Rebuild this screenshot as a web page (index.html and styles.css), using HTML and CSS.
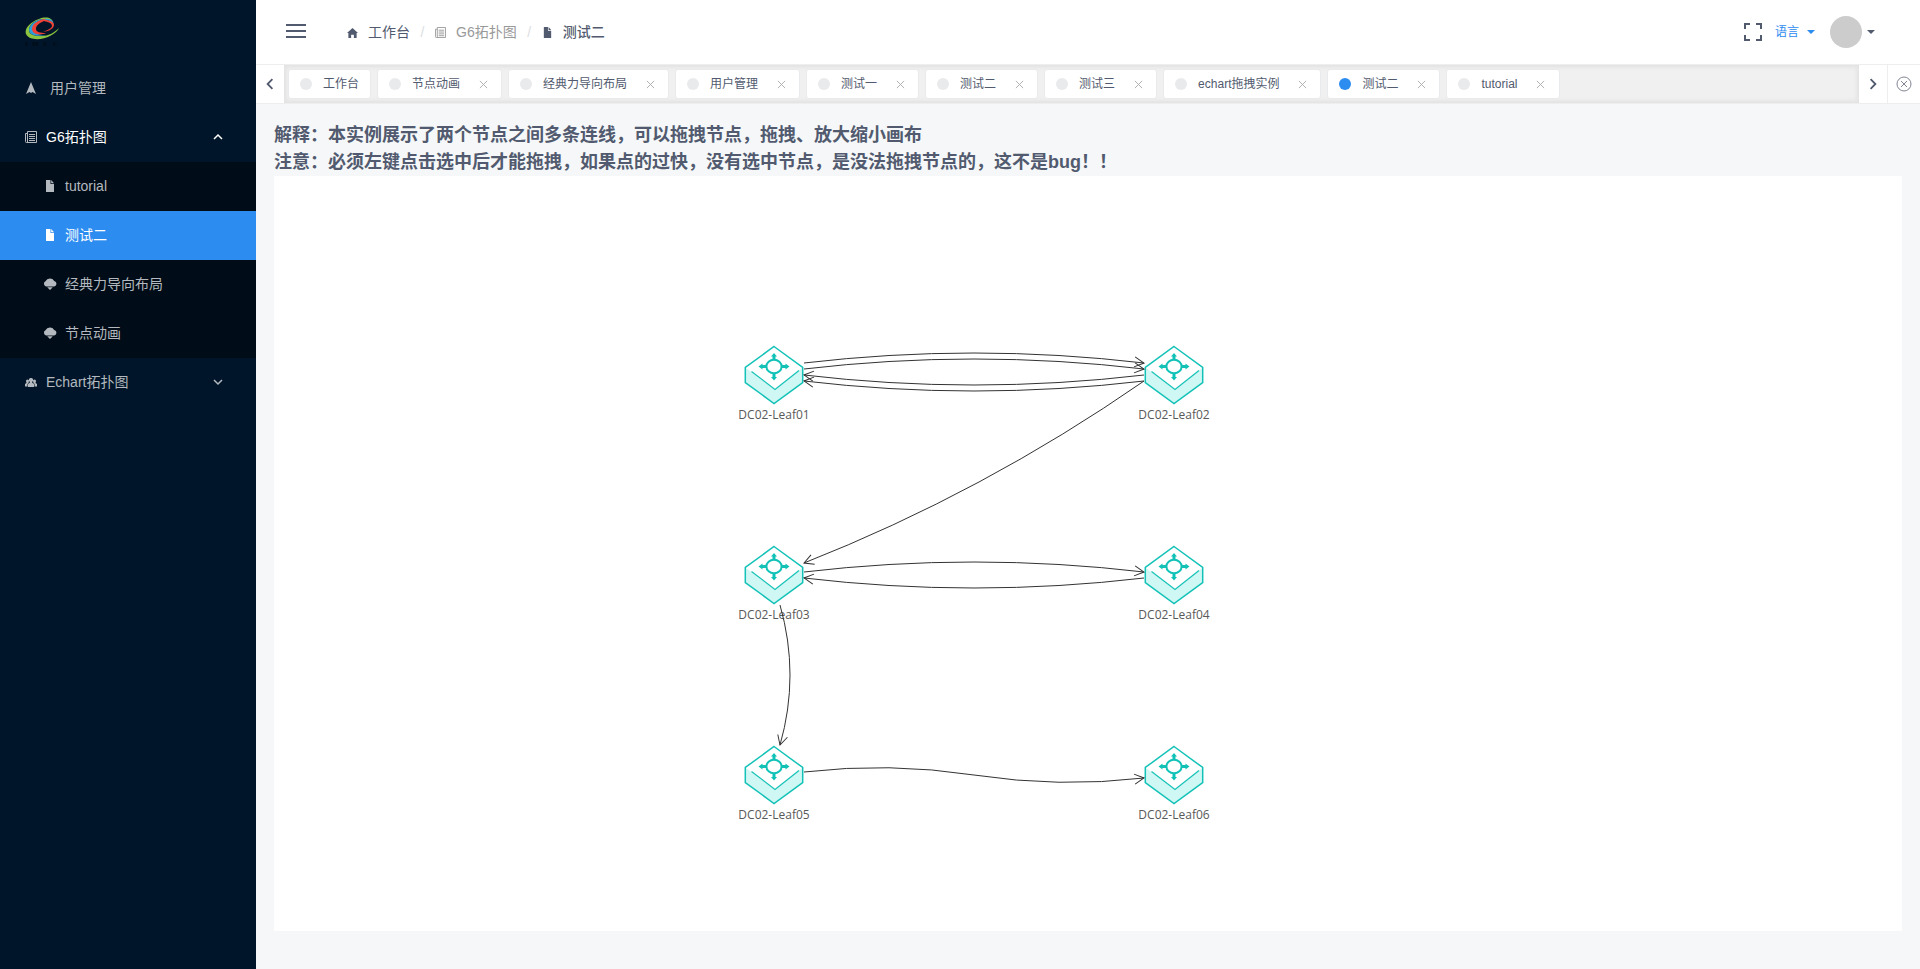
FILE: index.html
```html
<!DOCTYPE html>
<html lang="zh-CN">
<head>
<meta charset="utf-8">
<title>测试二</title>
<link rel="stylesheet" href="styles.css">
</head>
<body>
<svg class="defs" aria-hidden="true">
  <symbol id="i-doc" viewBox="0 0 12 12"><path fill="currentColor" d="M2 0h4.500v4H10v8H2zM7.200 0L10 3.200H7.200z"/></symbol>
  <symbol id="i-list" viewBox="0 0 12 12"><path fill="none" stroke="currentColor" d="M2.500.5h9v11h-9zM2.500 2.500h-2v8q0 1 1 1h2M4 3.500h6M4 5.500h6M4 7.500h6M4 9.500h6"/></symbol>
  <symbol id="i-cloud" viewBox="0 0 14 12"><path fill="currentColor" d="M3 8.500a2.800 2.800 0 0 1-.5-5.200A5 5 0 0 1 11.200 3a2.800 2.800 0 0 1 0 5.500zM4.200 9.200h5.600L7 12z"/></symbol>
  <symbol id="i-down" viewBox="0 0 10 10"><path fill="none" stroke="currentColor" stroke-width="1.500" d="M1 3l4 4 4-4"/></symbol>
  <symbol id="i-x" viewBox="0 0 10 10"><path fill="none" stroke="currentColor" d="M1 1l8 8M9 1L1 9"/></symbol>
  <symbol id="i-caret" viewBox="0 0 8 4"><path fill="currentColor" d="M0 0h8L4 4z"/></symbol>
  <symbol id="node" viewBox="-30 -30 60 60">
    <path fill="#fff" d="M0-28.500L28.700-7.500v15L0 28.500-28.700 7.500v-15z"/>
    <path fill="#cff7f4" d="M-28.700-7.500L1 15 28.700-7.500v15L0 28.500-28.700 7.500z"/>
    <path fill="none" stroke="#13c2b7" stroke-width="1.500" d="M0-28.500L28.700-7.500v15L0 28.500-28.700 7.500v-15z"/>
    <path fill="none" stroke="#13c2b7" stroke-width="1.200" d="M-22.500-3.500L1 14.500 25-4.500"/>
    <path fill="#13c2b7" d="M0-22l3 3.500H1.500v4h-3v-4H-3zM0 5.500L3 2H1.500v-4h-3v4H-3zM-15.500-8.500l4-3v1.500h4v3h-4v1.500zM15.500-8.500l-4-3v1.500h-4v3h4v1.500z"/>
    <ellipse cx="0" cy="-8.500" rx="7.600" ry="6.800" fill="#fff" stroke="#13c2b7" stroke-width="2"/>
  </symbol>
</svg>
<div class="layout">
  <aside class="side">
    <a class="logo" href="#" aria-label="IMSC">
      <svg width="36" height="32" viewBox="0 0 36 32">
        <path fill="#8bc53f" d="M28 7C28 2 21 0 14 3 5 6-1 13 1 18c3 7 17 6 24 2 5-3 8-5 9-8-5 5-11 8-17 8C8 20 4 18 4 14 4 8 12 3 19 3c4 0 7 1 9 4z"/>
        <path fill="#2a9fd8" d="M28 10C30 5 26 2 19 3 11 3 4 9 4 14c0 5 8 7 17 5-8 0-13-2-13-6C8 8 14 4 20 4c5 0 8 3 8 6z"/>
        <path fill="#ef4136" d="M19 3C11 5 7 9 7 13c0 5 7 7 14 4-6 0-10-1-10-4 0-4 4-6 8-8 4 1 8 2 8 5 0 2-4 4-9 6 7-1 11-4 11-7 0-4-5-4-10-6z"/>
        <text x="0 7 18 28" y="30" class="logo-text">IMSC</text>
      </svg>
    </a>
    <nav class="menu">
      <a class="item wide" href="#"><svg class="ic" viewBox="0 0 12 12"><path fill="currentColor" d="M6 0l5 12-3.500-2L6 11l-1.500-1L1 12z"/></svg>用户管理</a>
      <button class="item open"><svg class="ic"><use href="#i-list"/></svg><span class="grow">G6拓扑图</span><svg class="chev up"><use href="#i-down"/></svg></button>
      <div class="sub">
        <a class="item" href="#"><svg class="ic"><use href="#i-doc"/></svg>tutorial</a>
        <a class="item active" href="#"><svg class="ic"><use href="#i-doc"/></svg>测试二</a>
        <a class="item" href="#"><svg class="ic cloud"><use href="#i-cloud"/></svg>经典力导向布局</a>
        <a class="item" href="#"><svg class="ic cloud"><use href="#i-cloud"/></svg>节点动画</a>
      </div>
      <button class="item"><svg class="ic" viewBox="0 0 12 12"><path fill="currentColor" d="M6 2a2 2 0 0 1 1.500 3.500l-.5 1 2 1.500v3H3V8l2-1.500-.5-1A2 2 0 0 1 6 2M2.500 3.500A1.500 1.500 0 0 1 4 5l-.5 2L2.500 8v2.500H0V8l1.500-1L1 5a1.500 1.500 0 0 1 1.500-1.500M9.500 3.500A1.500 1.500 0 0 1 11 5l-.5 2L12 8v2.500H9.500V8l-1-1L8 5a1.500 1.500 0 0 1 1.500-1.500"/></svg><span class="grow">Echart拓扑图</span><svg class="chev"><use href="#i-down"/></svg></button>
    </nav>
  </aside>
  <div class="main">
    <header class="header">
      <button class="burger" aria-label="菜单"><svg width="20" height="14" viewBox="0 0 20 14"><path stroke="currentColor" stroke-width="2" d="M0 1h20M0 7h20M0 13h20"/></svg></button>
      <nav class="crumbs">
        <a href="#"><svg class="ic" viewBox="0 0 12 12"><path fill="currentColor" d="M6 1l6 5.500h-1.500V12h-3V8.500h-3V12h-3V6.500H0z"/></svg>工作台</a>
        <i>/</i>
        <a class="muted" href="#"><svg class="ic"><use href="#i-list"/></svg>G6拓扑图</a>
        <i>/</i>
        <a class="here" href="#"><svg class="ic"><use href="#i-doc"/></svg>测试二</a>
      </nav>
      <div class="tools">
        <button aria-label="全屏"><svg width="18" height="18" viewBox="0 0 18 18"><path fill="none" stroke="currentColor" stroke-width="2" d="M1 6V1h5M12 1h5v5M17 12v5h-5M6 17H1v-5"/></svg></button>
        <button class="lang">语言<svg class="caret"><use href="#i-caret"/></svg></button>
        <button class="user" aria-label="用户"><span class="avatar"></span><svg class="caret"><use href="#i-caret"/></svg></button>
      </div>
    </header>
    <div class="tabbar">
      <button class="scroll" aria-label="左"><svg class="arrow left"><use href="#i-down"/></svg></button>
      <div class="tabs">
        <div class="tab"><b></b><a href="#">工作台</a></div>
        <div class="tab"><b></b><a href="#">节点动画</a><button aria-label="关闭"><svg><use href="#i-x"/></svg></button></div>
        <div class="tab"><b></b><a href="#">经典力导向布局</a><button aria-label="关闭"><svg><use href="#i-x"/></svg></button></div>
        <div class="tab"><b></b><a href="#">用户管理</a><button aria-label="关闭"><svg><use href="#i-x"/></svg></button></div>
        <div class="tab"><b></b><a href="#">测试一</a><button aria-label="关闭"><svg><use href="#i-x"/></svg></button></div>
        <div class="tab"><b></b><a href="#">测试二</a><button aria-label="关闭"><svg><use href="#i-x"/></svg></button></div>
        <div class="tab"><b></b><a href="#">测试三</a><button aria-label="关闭"><svg><use href="#i-x"/></svg></button></div>
        <div class="tab"><b></b><a href="#">echart拖拽实例</a><button aria-label="关闭"><svg><use href="#i-x"/></svg></button></div>
        <div class="tab on"><b></b><a href="#">测试二</a><button aria-label="关闭"><svg><use href="#i-x"/></svg></button></div>
        <div class="tab"><b></b><a href="#">tutorial</a><button aria-label="关闭"><svg><use href="#i-x"/></svg></button></div>
      </div>
      <button class="scroll" aria-label="右"><svg class="arrow right"><use href="#i-down"/></svg></button>
      <button class="closeall" aria-label="关闭标签"><svg width="16" height="16" viewBox="0 0 16 16"><path fill="none" stroke="currentColor" d="M5 5l6 6M11 5l-6 6"/><circle cx="8" cy="8" r="7" fill="none" stroke="currentColor"/></svg></button>
    </div>
    <main class="content">
      <h2>解释：本实例展示了两个节点之间多条连线，可以拖拽节点，拖拽、放大缩小画布</h2>
      <h2>注意：必须左键点击选中后才能拖拽，如果点的过快，没有选中节点，是没法拖拽节点的，这不是bug！！</h2>
      <svg class="graph">
        <defs><marker id="tip" markerUnits="userSpaceOnUse" markerWidth="14" markerHeight="14" viewBox="-12 -7 14 14" orient="auto"><path fill="none" stroke="#333" d="M-9.500-5L0 0-9.500 5"/></marker></defs>
        <g>
          <use href="#node" x="470" y="169" width="60" height="60"/><text x="500" y="243">DC02-Leaf01</text>
          <use href="#node" x="870" y="169" width="60" height="60"/><text x="900" y="243">DC02-Leaf02</text>
          <use href="#node" x="470" y="369" width="60" height="60"/><text x="500" y="443">DC02-Leaf03</text>
          <use href="#node" x="870" y="369" width="60" height="60"/><text x="900" y="443">DC02-Leaf04</text>
          <use href="#node" x="470" y="569" width="60" height="60"/><text x="500" y="643">DC02-Leaf05</text>
          <use href="#node" x="870" y="569" width="60" height="60"/><text x="900" y="643">DC02-Leaf06</text>
        </g>
        <g class="edges">
          <path d="M530 187Q700 167 870 187"/>
          <path d="M530 193Q700 173 870 193"/>
          <path d="M870 199Q700 219 530 199"/>
          <path d="M870 205Q700 225 530 205"/>
          <path d="M870 205Q710 316 530 387"/>
          <path d="M530 396Q700 376 870 396"/>
          <path d="M870 402Q700 422 530 402"/>
          <path d="M506 429Q526 499 506 569"/>
          <path d="M530 596Q615 586 700 599T870 602"/>
        </g>
      </svg>
    </main>
  </div>
</div>
</body>
</html>
```
FILE: styles.css
```css
* { box-sizing: border-box; }
body {
  margin: 0;
  font: 14px/1.5 "Liberation Sans", "Noto Sans CJK SC", sans-serif;
  color: #515a6e;
  background: #f5f7f9;
}
a { color: inherit; text-decoration: none; }
button { font: inherit; color: inherit; background: none; border: 0; padding: 0; cursor: pointer; }
svg { display: block; flex: none; }
.defs { width: 0; height: 0; position: absolute; }
.ic { width: 12px; height: 12px; }
.layout { display: flex; min-height: 100vh; }

.side { flex: none; width: 256px; background: #001529; color: #b3b9bf; }
.logo { display: block; height: 64px; padding: 16px 25px; }
.logo-text { font: bold 7px "Liberation Serif", serif; fill: #000a14; }
.item { display: flex; align-items: center; gap: 9px; width: 100%; height: 49px; padding: 0 33px 1px 25px; text-align: left; }
.item.wide { gap: 13px; }
.item.open { color: #fff; }
.item.open .ic { color: #b3b9bf; }
.sub { background: #000c17; }
.sub .item { padding-left: 44px; }
.item.active { background: #2d8cf0; color: #fff; }
.cloud { width: 14px; margin: 0 -1px; }
.grow { flex: 1; }
.chev { width: 10px; height: 10px; }
.up { transform: rotate(180deg); }

.main { flex: 1; min-width: 0; display: flex; flex-direction: column; }
.header { display: flex; align-items: center; height: 64px; padding: 0 45px 0 30px; background: #fff; }
.burger { padding-bottom: 2px; }
.crumbs { display: flex; align-items: center; gap: 10px; margin-left: 41px; }
.crumbs a { display: flex; align-items: center; gap: 10px; }
.crumbs .ic { width: 11px; height: 11px; }
.crumbs i { color: #dcdee2; font-style: normal; width: 5px; text-align: center; }
.crumbs .muted { color: #999; }
.crumbs .here { font-weight: 500; }
.tools { display: flex; align-items: center; gap: 13px; margin-left: auto; }
.lang { display: flex; align-items: center; gap: 8px; font-size: 12px; color: #2d8cf0; }
.user { display: flex; align-items: center; gap: 5px; margin-left: 2px; }
.avatar { width: 32px; height: 32px; border-radius: 50%; background: #ccc; }
.caret { width: 8px; height: 4px; }

.tabbar { display: flex; height: 40px; background: #fff; border-top: 1px solid #eee; border-bottom: 1px solid #eee; }
.scroll { display: grid; place-items: center; width: 28px; }
.arrow { width: 12px; height: 12px; }
.left { transform: rotate(90deg); }
.right { transform: rotate(-90deg); }
.closeall { display: grid; place-items: center; width: 33px; padding-right: 1px; border-left: 1px solid #eee; color: #808695; }
.tabs { flex: 1; min-width: 0; overflow: hidden; display: flex; align-items: center; gap: 6px; padding: 0 4px; background: #f0f0f0; box-shadow: inset 0 0 4px 2px rgba(100, 100, 100, .1); }
.tab { flex: none; display: flex; align-items: center; height: 30px; padding: 0 11px; border: 1px solid #e8eaec; border-radius: 3px; background: #fff; font-size: 12px; }
.tab b { width: 12px; height: 12px; margin-right: 11px; border-radius: 50%; background: #e8eaec; }
.tab.on b { background: #2d8cf0; }
.tab button { display: grid; place-items: center; width: 14px; height: 14px; margin-left: 16px; color: #aaa; }
.tab button svg { width: 9px; height: 9px; }

.content { flex: 1; display: flex; flex-direction: column; padding: 18px 18px 38px; }
h2 { margin: 0; font-size: 18px; line-height: 27px; font-weight: bold; }
.graph { flex: 1 0 auto; width: 100%; min-height: 700px; background: #fff; }
.graph text { font: 12px "Open Sans", "Noto Sans", sans-serif; fill: #595959; text-anchor: middle; }
.edges path { fill: none; stroke: #333; stroke-width: 1; marker-end: url(#tip); }
```
